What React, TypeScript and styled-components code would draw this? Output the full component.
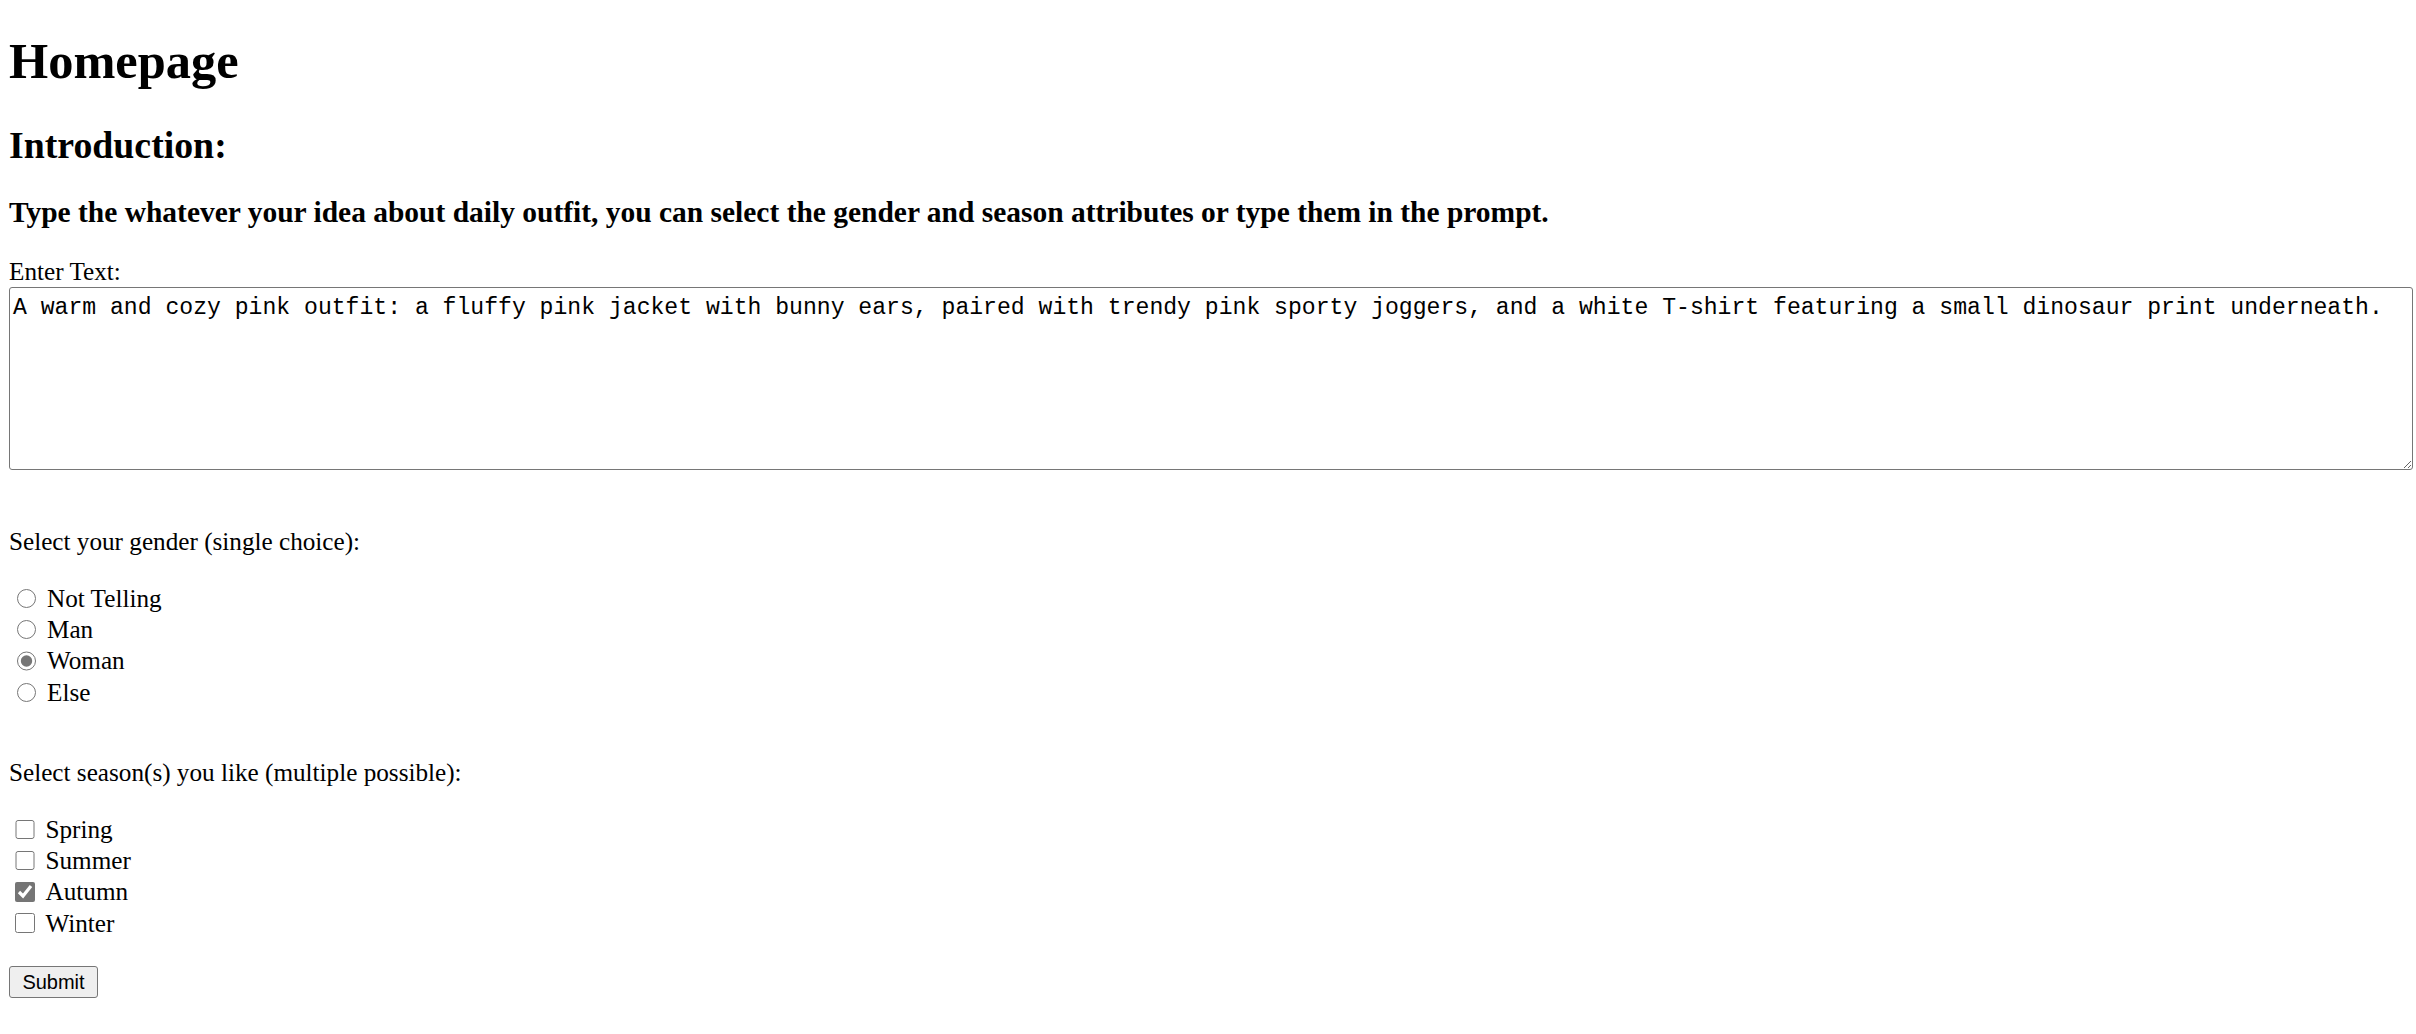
import { createGlobalStyle, styled } from "styled-components";

const GlobalStyle = createGlobalStyle`
  html, body {
    margin: 0;
    padding: 0;
    background: #fff;
  }
  body {
    font-family: "Liberation Serif", "Times New Roman", serif;
    font-size: 25.2px;
    line-height: 1.15;
    color: #000;
  }
`;

const Page = styled.main`
  display: flex;
  flex-direction: column;
  align-items: flex-start;
  padding: 0 3px 30px 9px;
`;

const Title = styled.h1`
  font-size: 50.4px;
  font-weight: bold;
  margin: 32.6px 0 0;
`;

const SubTitle = styled.h2`
  font-size: 37.8px;
  font-weight: bold;
  margin: 33px 0 0;
`;

const Lead = styled.h3`
  font-size: 29.48px;
  font-weight: bold;
  margin: 29px 0 0;
`;

const Form = styled.form`
  display: flex;
  flex-direction: column;
  align-items: flex-start;
  align-self: stretch;
`;

const FieldLabel = styled.label`
  margin-top: 28px;
`;

const TextArea = styled.textarea`
  box-sizing: border-box;
  align-self: stretch;
  height: 183px;
  margin: 0;
  padding: 7px 3px 3px 3px;
  border: 1px solid #767676;
  border-radius: 3px;
  font-family: "Liberation Mono", "Consolas", monospace;
  font-size: 23.1px;
  line-height: 1.15;
  color: #000;
  background: #fff;
  resize: both;
`;

const Prompt = styled.p<{ $top: number }>`
  margin: ${(p) => p.$top}px 0 0;
`;

const OptionList = styled.div`
  display: flex;
  flex-direction: column;
  margin-top: 25.4px;
`;

const Option = styled.div`
  display: flex;
  align-items: center;
  height: 31.3px;
  line-height: 31.3px;
`;

const Radio = styled.input`
  width: 19.5px;
  height: 19.5px;
  margin: 0 11px 0 7.5px;
  accent-color: #757575;
`;

const Check = styled.input`
  width: 19.5px;
  height: 19.5px;
  margin: 0 11px 0 6px;
  accent-color: #757575;
`;

const OptionText = styled.label`
  white-space: nowrap;
`;

const SubmitButton = styled.button`
  box-sizing: border-box;
  width: 89px;
  height: 32px;
  margin: 27px 0 0;
  padding: 0;
  font-family: "Liberation Sans", Arial, sans-serif;
  font-size: 20px;
  line-height: 1;
  border: 1px solid #767676;
  border-radius: 3px;
  background: #efefef;
  color: #000;
`;

const genders = ["Not Telling", "Man", "Woman", "Else"];
const seasons = ["Spring", "Summer", "Autumn", "Winter"];

const App = () => {
  return (
    <Page>
      <GlobalStyle />
      <Title>Homepage</Title>
      <SubTitle>Introduction:</SubTitle>
      <Lead>
        Type the whatever your idea about daily outfit, you can select the gender and season
        attributes or type them in the prompt.
      </Lead>
      <Form onSubmit={(e) => e.preventDefault()}>
        <FieldLabel htmlFor="prompt">Enter Text:</FieldLabel>
        <TextArea
          id="prompt"
          defaultValue="A warm and cozy pink outfit: a fluffy pink jacket with bunny ears, paired with trendy pink sporty joggers, and a white T-shirt featuring a small dinosaur print underneath."
        />
        <Prompt $top={58.5}>Select your gender (single choice):</Prompt>
        <OptionList>
          {genders.map((g) => (
            <Option key={g}>
              <Radio type="radio" name="gender" id={g} defaultChecked={g === "Woman"} />
              <OptionText htmlFor={g}>{g}</OptionText>
            </Option>
          ))}
        </OptionList>
        <Prompt $top={51.4}>Select season(s) you like (multiple possible):</Prompt>
        <OptionList>
          {seasons.map((s) => (
            <Option key={s}>
              <Check type="checkbox" id={s} defaultChecked={s === "Autumn"} />
              <OptionText htmlFor={s}>{s}</OptionText>
            </Option>
          ))}
        </OptionList>
        <SubmitButton type="submit">Submit</SubmitButton>
      </Form>
    </Page>
  );
};

export default App;
